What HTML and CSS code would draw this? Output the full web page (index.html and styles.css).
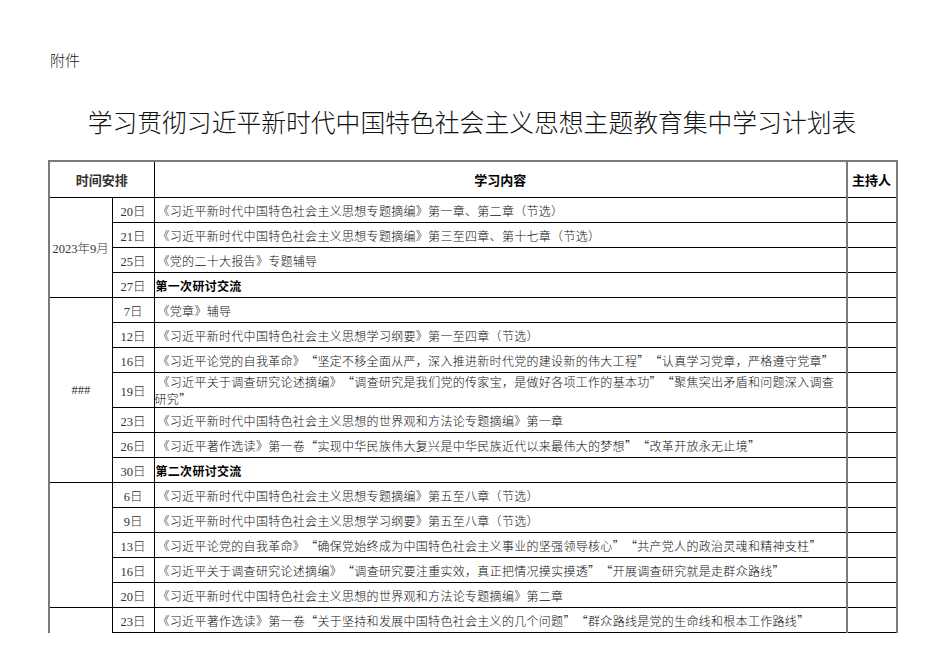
FILE: index.html
```html
<!DOCTYPE html>
<html lang="zh-CN">
<head>
<meta charset="utf-8">
<title>学习计划表</title>
<link rel="stylesheet" href="styles.css">
</head>
<body>
<div class="page">
  <p class="annex">附件</p>
  <h1 class="title">学习贯彻习近平新时代中国特色社会主义思想主题教育集中学习计划表</h1>
  <table class="plan">
    <colgroup>
      <col class="c-month"><col class="c-day"><col class="c-content"><col class="c-host">
    </colgroup>
    <thead>
      <tr><th class="month" colspan="2">时间安排</th><th>学习内容</th><th class="host">主持人</th></tr>
    </thead>
    <tbody>
      <tr><td class="month" rowspan="4">2023年9月</td><td class="day">20日</td><td class="content">《习近平新时代中国特色社会主义思想专题摘编》第一章、第二章（节选）</td><td class="host"></td></tr>
      <tr><td class="day">21日</td><td class="content">《习近平新时代中国特色社会主义思想专题摘编》第三至四章、第十七章（节选）</td><td class="host"></td></tr>
      <tr><td class="day">25日</td><td class="content">《党的二十大报告》专题辅导</td><td class="host"></td></tr>
      <tr><td class="day">27日</td><td class="content strong">第一次研讨交流</td><td class="host"></td></tr>

      <tr><td class="month" rowspan="7">###</td><td class="day">7日</td><td class="content">《党章》辅导</td><td class="host"></td></tr>
      <tr><td class="day">12日</td><td class="content">《习近平新时代中国特色社会主义思想学习纲要》第一至四章（节选）</td><td class="host"></td></tr>
      <tr><td class="day">16日</td><td class="content">《习近平论党的自我革命》<span class="ql">“</span>坚定不移全面从严，深入推进新时代党的建设新的伟大工程<span class="qr">”</span><span class="ql">“</span>认真学习党章，严格遵守党章<span class="qr">”</span></td><td class="host"></td></tr>
      <tr class="tall"><td class="day">19日</td><td class="content wrap">《习近平关于调查研究论述摘编》<span class="ql">“</span>调查研究是我们党的传家宝，是做好各项工作的基本功<span class="qr">”</span><span class="ql">“</span>聚焦突出矛盾和问题深入调查<br><span class="cont">研究<span class="qr">”</span></span></td><td class="host"></td></tr>
      <tr><td class="day">23日</td><td class="content">《习近平新时代中国特色社会主义思想的世界观和方法论专题摘编》第一章</td><td class="host"></td></tr>
      <tr><td class="day">26日</td><td class="content">《习近平著作选读》第一卷<span class="ql">“</span>实现中华民族伟大复兴是中华民族近代以来最伟大的梦想<span class="qr">”</span><span class="ql">“</span>改革开放永无止境<span class="qr">”</span></td><td class="host"></td></tr>
      <tr><td class="day">30日</td><td class="content strong">第二次研讨交流</td><td class="host"></td></tr>

      <tr><td class="month" rowspan="5"></td><td class="day">6日</td><td class="content">《习近平新时代中国特色社会主义思想专题摘编》第五至八章（节选）</td><td class="host"></td></tr>
      <tr><td class="day">9日</td><td class="content">《习近平新时代中国特色社会主义思想学习纲要》第五至八章（节选）</td><td class="host"></td></tr>
      <tr><td class="day">13日</td><td class="content">《习近平论党的自我革命》<span class="ql">“</span>确保党始终成为中国特色社会主义事业的坚强领导核心<span class="qr">”</span><span class="ql">“</span>共产党人的政治灵魂和精神支柱<span class="qr">”</span></td><td class="host"></td></tr>
      <tr><td class="day">16日</td><td class="content">《习近平关于调查研究论述摘编》<span class="ql">“</span>调查研究要注重实效，真正把情况摸实摸透<span class="qr">”</span><span class="ql">“</span>开展调查研究就是走群众路线<span class="qr">”</span></td><td class="host"></td></tr>
      <tr><td class="day">20日</td><td class="content">《习近平新时代中国特色社会主义思想的世界观和方法论专题摘编》第二章</td><td class="host"></td></tr>

      <tr><td class="month open"></td><td class="day">23日</td><td class="content">《习近平著作选读》第一卷<span class="ql">“</span>关于坚持和发展中国特色社会主义的几个问题<span class="qr">”</span><span class="ql">“</span>群众路线是党的生命线和根本工作路线<span class="qr">”</span></td><td class="host"></td></tr>
    </tbody>
  </table>
</div>
</body>
</html>
```

FILE: styles.css
```css
html, body {
  margin: 0;
  padding: 0;
  background: #fff;
}

body {
  color: #000;
  font-family: "Noto Sans CJK SC", sans-serif;
}

.page {
  padding: 50px 0 0 48px;
  width: 848px;
}

.annex {
  margin: 0 0 0 2px;
  font-size: 15px;
  line-height: 20px;
  font-weight: 300;
  color: #222;
}

.title {
  margin: 36px 0 24px 0;
  font-size: 24.8px;
  line-height: 30px;
  font-weight: 300;
  text-align: center;
  white-space: nowrap;
  color: #111;
}

.plan {
  width: 848px;
  table-layout: fixed;
  border-collapse: collapse;
}

.c-month { width: 63px; }
.c-day { width: 42px; }
.c-content { width: 693px; }
.c-host { width: 50px; }

.plan th,
.plan td {
  border: 1px solid #000;
  padding: 0;
  height: 24px;
  vertical-align: middle;
  overflow: hidden;
}

.plan th {
  height: 35px;
  font-size: 13px;
  font-weight: 700;
  text-align: center;
  border-top: 2px solid #7a7a7a;
}

.plan th.host {
  text-align: left;
  padding-left: 4px;
}

.month {
  border-left: 2px solid #7a7a7a !important;
  text-align: center;
  font-family: "Liberation Serif", "Noto Sans CJK SC", serif;
  font-size: 12.5px;
  font-weight: 300;
  color: #333;
}

.plan td.open {
  border-bottom: none;
}

.day {
  text-align: center;
  font-family: "Liberation Serif", "Noto Sans CJK SC", serif;
  font-size: 12.5px;
  font-weight: 300;
  color: #333;
}

.content {
  padding-left: 3px !important;
  font-size: 12px;
  letter-spacing: 0.3px;
  font-weight: 300;
  white-space: nowrap;
  color: #111;
}

.ql,
.qr {
  display: inline-block;
  width: 12.3px;
  line-height: 1;
}

.ql {
  text-align: right;
}

.qr {
  text-align: left;
}

.content.strong {
  padding-left: 1px !important;
  font-weight: 700;
  color: #000;
}

.tall td {
  height: 34px;
}

.content.wrap {
  line-height: 17px;
}

.cont {
  margin-left: -3px;
}

.plan .host {
  border-left: 2px solid #7a7a7a;
  border-right: 2px solid #7a7a7a;
}
```
